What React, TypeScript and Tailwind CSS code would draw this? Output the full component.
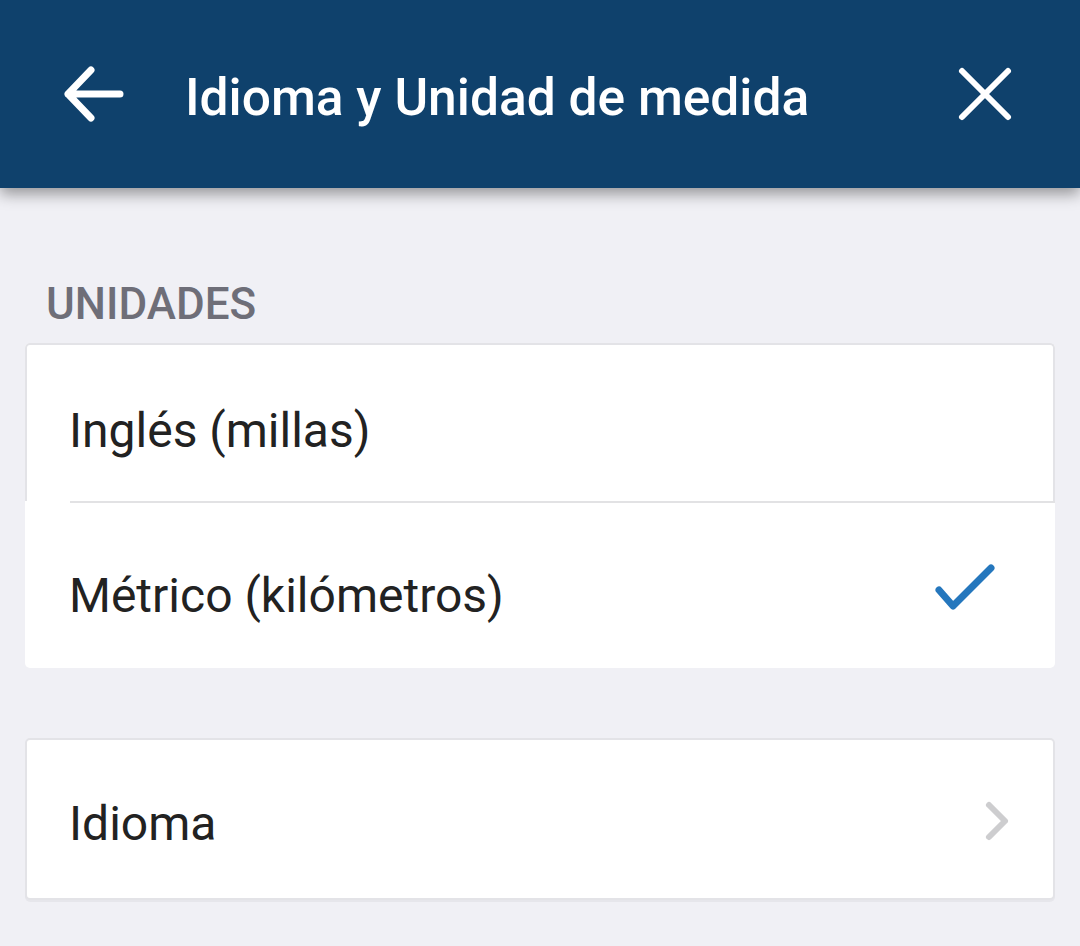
import React from 'react';

function BackIcon() {
  return (
    <svg width="66" height="66" viewBox="0 0 66 66" fill="none" className="shrink-0">
      <path
        d="M60 33H8M31 9L8 33L31 57"
        stroke="#ffffff"
        strokeWidth="7"
        strokeLinecap="round"
        strokeLinejoin="round"
      />
    </svg>
  );
}

function CloseIcon() {
  return (
    <svg width="60" height="60" viewBox="0 0 60 60" fill="none" className="shrink-0">
      <path
        d="M7 7L53 53M53 7L7 53"
        stroke="#ffffff"
        strokeWidth="6"
        strokeLinecap="round"
      />
    </svg>
  );
}

function CheckIcon() {
  return (
    <svg width="64" height="48" viewBox="0 0 64 48" fill="none" className="shrink-0">
      <path
        d="M4 27L18 43L56 5"
        stroke="#2577bd"
        strokeWidth="7"
        strokeLinecap="round"
        strokeLinejoin="round"
      />
    </svg>
  );
}

function ChevronIcon() {
  return (
    <svg width="35" height="46" viewBox="0 0 35 46" fill="none" className="shrink-0">
      <path
        d="M9 7L25 23L9 39"
        stroke="#cdcdcf"
        strokeWidth="6"
        strokeLinecap="round"
        strokeLinejoin="round"
      />
    </svg>
  );
}

export default function App() {
  return (
    <div
      className="min-h-[946px] w-[1080px] bg-[#f0f0f5] overflow-hidden"
      style={{ fontFamily: 'Roboto, "Noto Sans", sans-serif' }}
    >
      <header className="relative z-10 flex h-[188px] items-center bg-[#0f416c] shadow-[0_6px_14px_rgba(0,0,0,0.38)]">
        <div className="ml-[60px]">
          <BackIcon />
        </div>
        <h1 className="ml-[59px] mt-[7px] text-[51.5px] font-medium leading-none text-white">
          Idioma y Unidad de medida
        </h1>
        <div className="ml-auto mr-[65px]">
          <CloseIcon />
        </div>
      </header>

      <main className="px-[25px] pt-[94px]">
        <p className="pl-[21px] text-[44px] font-medium leading-none text-[#6e6e78]">
          UNIDADES
        </p>

        <section className="mt-[17px] rounded-[5px] bg-white">
          <div className="flex h-[158px] rounded-t-[5px] border-x-2 border-t-2 border-[#e3e3e7] pl-[42px]">
            <span className="mt-[62px] text-[48px] leading-none text-[#222222]">
              Inglés (millas)
            </span>
          </div>
          <div className="ml-[45px] h-[2px] bg-[#e2e2e4]" />
          <div className="flex h-[165px] items-start pl-[44px]">
            <span className="mt-[69px] text-[48px] leading-none text-[#222222]">
              Métrico (kilómetros)
            </span>
            <div className="ml-auto mr-[56px] mt-[60px]">
              <CheckIcon />
            </div>
          </div>
        </section>

        <section className="mt-[70px] flex h-[162px] items-start rounded-[5px] border-2 border-[#e3e3e7] bg-white pl-[42px] shadow-[0_2px_0_rgba(0,0,0,0.04)]">
          <span className="mt-[60px] text-[48px] leading-none text-[#222222]">Idioma</span>
          <div className="ml-auto mr-[38px] mt-[58px]">
            <ChevronIcon />
          </div>
        </section>
      </main>
    </div>
  );
}
